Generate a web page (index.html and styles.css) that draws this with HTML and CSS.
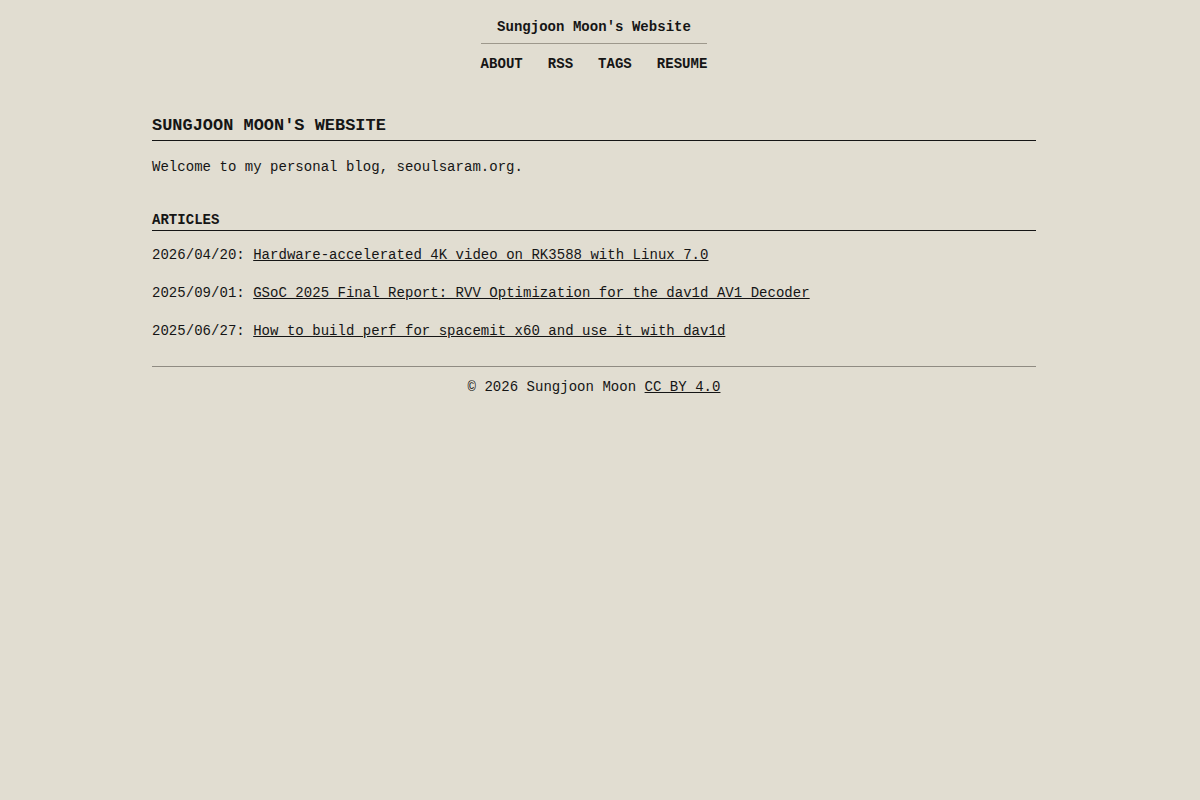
FILE: index.html
```html
<!DOCTYPE html>
<html lang="en">
<head>
  <meta charset="UTF-8">
  <meta name="viewport" content="width=device-width, initial-scale=1.0">
  <title>Sungjoon Moon's Website</title>
  <link rel="stylesheet" href="styles.css">
</head>
<body>
  <div class="page">
    <header class="site-header">
      <div class="brand">
        <a href="/" class="site-title">Sungjoon Moon's Website</a>
        <hr class="brand-rule">
        <nav class="nav">
          <a href="/about/">ABOUT</a>
          <a href="/index.xml">RSS</a>
          <a href="/tags/">TAGS</a>
          <a href="/resume/">RESUME</a>
        </nav>
      </div>
    </header>

    <main class="content">
      <h1 class="page-title">SUNGJOON MOON'S WEBSITE</h1>
      <p class="intro">Welcome to my personal blog, seoulsaram.org.</p>

      <h2 class="section-title">ARTICLES</h2>
      <ul class="posts">
        <li>2026/04/20: <a href="#">Hardware-accelerated 4K video on RK3588 with Linux 7.0</a></li>
        <li>2025/09/01: <a href="#">GSoC 2025 Final Report: RVV Optimization for the dav1d AV1 Decoder</a></li>
        <li>2025/06/27: <a href="#">How to build perf for spacemit x60 and use it with dav1d</a></li>
      </ul>
    </main>

    <footer class="site-footer">
      <hr class="footer-rule">
      <p>&copy; 2026 Sungjoon Moon <a href="#">CC BY 4.0</a></p>
    </footer>
  </div>
</body>
</html>
```
FILE: styles.css
```css
body {
  margin: 0;
  padding: 0;
  background-color: #e1ddd1;
  color: #151515;
  font-family: "Liberation Mono", "DejaVu Sans Mono", monospace;
  font-size: 14px;
  line-height: 20px;
  letter-spacing: 0.03px;
}

a {
  color: #151515;
}

.page {
  max-width: 884px;
  margin: 0 auto;
  padding: 17px 0 0;
  position: relative;
  left: -6px;
}

/* Header */
.site-header {
  display: flex;
  justify-content: center;
}

.brand {
  display: flex;
  flex-direction: column;
  align-items: stretch;
  text-align: center;
}

.site-title {
  font-weight: bold;
  text-decoration: none;
}

.brand-rule {
  border: none;
  border-top: 1px solid #9d988c;
  margin: 6px 0 10px;
}

.nav {
  display: flex;
  gap: 25px;
}

.nav a {
  font-weight: bold;
  text-decoration: none;
}

/* Main content */
.content {
  margin-top: 40px;
}

.page-title {
  font-size: 16.9px;
  line-height: 24px;
  font-weight: bold;
  margin: 0;
  padding-bottom: 2px;
  border-bottom: 1px solid #151515;
}

.intro {
  margin: 16px 0 0;
}

.section-title {
  font-size: 14px;
  line-height: 20px;
  font-weight: bold;
  margin: 33px 0 0;
  padding-bottom: 0;
  border-bottom: 1px solid #151515;
}

.posts {
  list-style: none;
  margin: 14px 0 0;
  padding: 0;
}

.posts li {
  margin-bottom: 18px;
}

.posts li:last-child {
  margin-bottom: 0;
}

/* Footer */
.site-footer {
  margin-top: 25px;
  text-align: center;
}

.footer-rule {
  border: none;
  border-top: 1px solid #8f8b82;
  margin: 0;
}

.site-footer p {
  margin: 10px 0 0;
}
```
